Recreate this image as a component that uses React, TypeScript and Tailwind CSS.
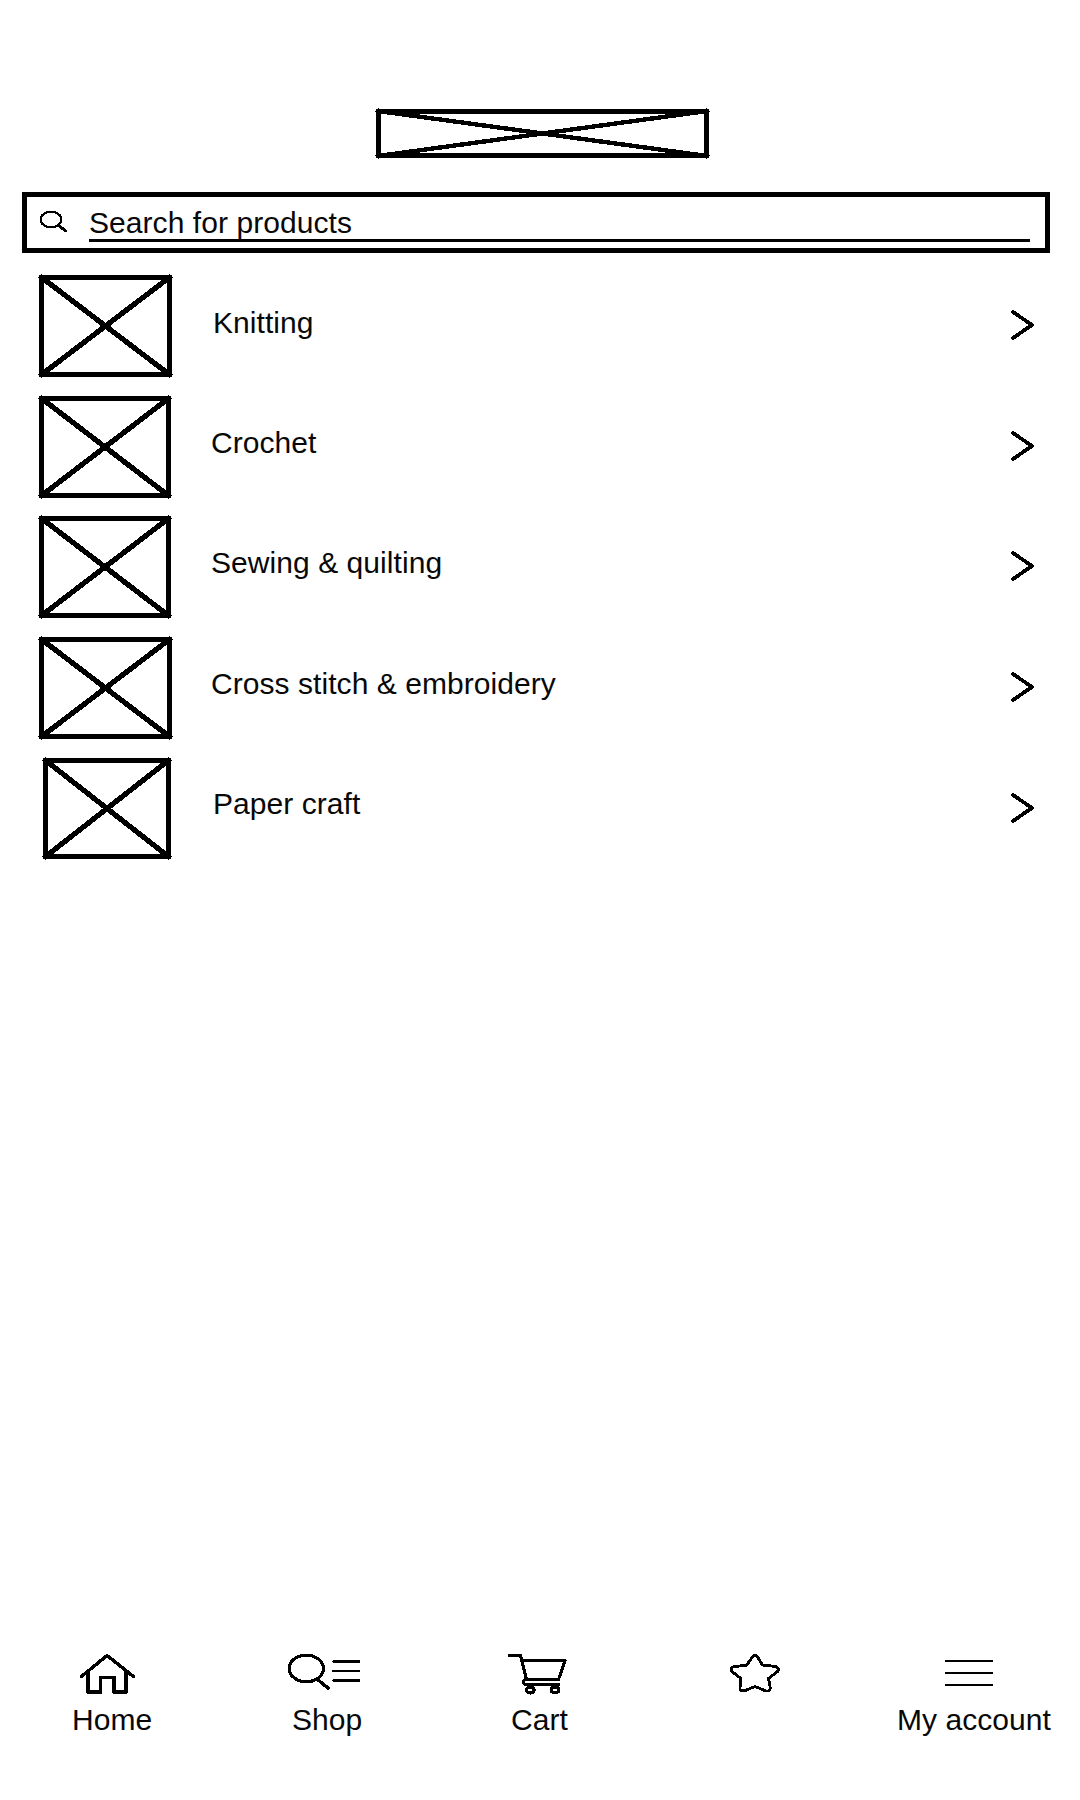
import type { ReactNode } from "react";

type CrossedBoxProps = { width: number; height: number; thin?: boolean };

/* Image placeholder: an outlined rectangle with both diagonals. */
function CrossedBox({ width, height, thin = false }: CrossedBoxProps) {
  const w = width + 4;
  const h = height + 4;
  return (
    <svg
      width={w}
      height={h}
      viewBox={`-2 -2 ${w} ${h}`}
      fill="none"
      stroke="black"
      shapeRendering="crispEdges"
      className="-m-0.5 block shrink-0"
      aria-hidden="true"
    >
      <rect x={2.5} y={2.5} width={width - 5} height={height - 5} strokeWidth={5} />
      <path
        d={`M2 2L${width - 2} ${height - 2}M${width - 2} 2L2 ${height - 2}`}
        strokeWidth={thin ? 4.4 : 5.3}
      />
      <path
        d={`M-1 2.5H3M${width - 3} 2.5H${width + 1}M-1 ${height - 2.5}H3M${width - 3} ${height - 2.5}H${width + 1}M2.5 -1V3M${width - 2.5} -1V3M2.5 ${height - 3}V${height + 1}M${width - 2.5} ${height - 3}V${height + 1}`}
        strokeWidth={1}
      />
    </svg>
  );
}

const categories = [
  { name: "Knitting", row: "h-[121px] pl-[39px]", label: "ml-[41px]", width: 133, height: 102 },
  { name: "Crochet", row: "h-[120px] pl-[39px]", label: "ml-[40px] -mt-px", width: 132, height: 102 },
  { name: "Sewing & quilting", row: "h-[121px] pl-[39px]", label: "ml-[40px] -mt-px", width: 132, height: 102 },
  { name: "Cross stitch & embroidery", row: "h-[121px] pl-[39px]", label: "ml-[39px] -mt-px", width: 133, height: 102 },
  { name: "Paper craft", row: "h-[121px] pl-[43px]", label: "ml-[42px] -mt-0.5", width: 128, height: 101 },
];

type NavItemProps = { label?: string; className: string; labelClass?: string; viewBox: string; children: ReactNode };

function NavItem({ label, className, labelClass = "", viewBox, children }: NavItemProps) {
  return (
    <a className={`flex shrink-0 flex-col items-start ${className}`} aria-label={label ?? "Favourites"}>
      <svg
        width="100"
        height="52"
        viewBox={viewBox}
        fill="none"
        stroke="black"
        strokeWidth="3.4"
        strokeLinecap="round"
        strokeLinejoin="round"
        shapeRendering="crispEdges"
      >
        {children}
      </svg>
      {label && <span className={`whitespace-nowrap ${labelClass}`}>{label}</span>}
    </a>
  );
}

export default function App() {
  return (
    <div className="flex h-[1800px] w-[1080px] flex-col overflow-hidden bg-white font-['Liberation_Sans',Arial,sans-serif] text-[30px] leading-9 tracking-[0.06px] text-[#080808]">
      <header className="pt-[109px]">
        <div className="ml-[376px] flex">
          <CrossedBox width={333} height={49} thin />
        </div>
        <div className="mt-[34px] ml-[22px] flex h-[61px] w-[1028px] border-[5px] border-black">
          <svg
            width="30"
            height="24"
            viewBox="0 0 30 24"
            fill="none"
            stroke="black"
            strokeLinecap="round"
            shapeRendering="crispEdges"
            className="mt-[12px] ml-[11px] shrink-0"
          >
            <ellipse cx="13" cy="10.5" rx="10.3" ry="7.8" strokeWidth="2.3" />
            <path d="M21 17L28 22" strokeWidth="3" />
          </svg>
          <div className="mt-[8px] ml-[21px] h-[37px] w-[941px] border-b-[3px] border-black">
            Search for products
          </div>
        </div>
      </header>

      <main className="grow pt-[22px]">
        {categories.map((c) => (
          <div key={c.name} className={`flex items-start pr-[45px] ${c.row}`}>
            <CrossedBox width={c.width} height={c.height} />
            <span className={c.label}>
              <span className="block pt-[30px]">{c.name}</span>
            </span>
            <svg
              width="24"
              height="30"
              viewBox="0 0 24 30"
              fill="none"
              stroke="black"
              strokeWidth="3.8"
              strokeLinejoin="round"
              strokeLinecap="round"
              shapeRendering="crispEdges"
              className="mt-[35px] ml-auto shrink-0"
            >
              <path d="M2 2L21 15L2 28" />
            </svg>
          </div>
        ))}
      </main>

      <nav className="flex h-[150px] pl-[70px]">
        <NavItem label="Home" className="w-[216px]" labelClass="ml-[2px]" viewBox="20 10 100 52">
          <path d="M31.5 36.5L57 15.5L83.5 36.5" strokeWidth="3.4" />
          <path d="M38 32V52H50.5V37.5H64V52H76V32" strokeWidth="3.9" />
        </NavItem>
        <NavItem label="Shop" className="w-[220px]" labelClass="ml-[6px]" viewBox="16 10 100 52">
          <ellipse cx="36.3" cy="28.5" rx="17.1" ry="13.3" strokeWidth="3.2" />
          <path d="M47.5 39.5L58 48" />
          <path d="M64 21.5H88.5M64 40.5H88.5" strokeWidth="3" />
          <path d="M63 31H89.5" strokeWidth="2" />
        </NavItem>
        <NavItem label="Cart" className="w-[222px]" labelClass="ml-[5px]" viewBox="16 10 100 52">
          <path d="M19.5 15.5H30.5L36.5 39.5H68.5L75.2 20.5H33" strokeWidth="3.1" />
          <path d="M36 39.5C33 39.5 32 44.5 36 44.5H68.5" strokeWidth="3" />
          <ellipse cx="40.2" cy="50" rx="4" ry="3" strokeWidth="3.1" />
          <ellipse cx="65" cy="50" rx="4" ry="3" strokeWidth="3.1" />
        </NavItem>
        <NavItem className="w-[166px]" viewBox="28 10 100 52">
          <path
            d="M52.5 17Q55 13.5 57.5 17L62.5 25L75.5 26.5Q80 28.5 77.5 31.5L68.5 38.5L70.2 47.5Q70.5 52 65.5 50.8L55 46.5L44.5 50.8Q39.5 51.5 40 47.5L41 38.5L32 31.5Q29.5 28 34.5 26.5L46.5 25.3Z"
            strokeWidth="2.9"
          />
        </NavItem>
        <NavItem label="My account" className="w-[180px]" labelClass="ml-[3px]" viewBox="14 10 100 52">
          <path d="M65 21H113M65 33H113M65 45H113" strokeWidth="2" strokeLinecap="butt" />
        </NavItem>
      </nav>
    </div>
  );
}
